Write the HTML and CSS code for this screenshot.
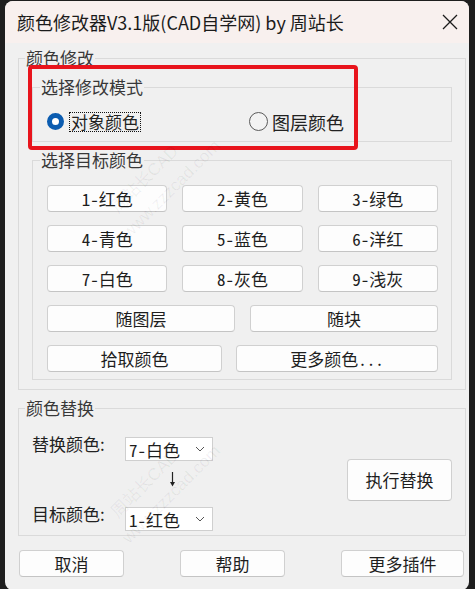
FILE: index.html
```html
<!DOCTYPE html>
<html lang="zh">
<head>
<meta charset="utf-8">
<title>颜色修改器</title>
<link rel="stylesheet" href="styles.css">
</head>
<body>
<div class="window">
  <div class="titlebar">
    <span class="title">颜色修改器V3.1版(CAD自学网) by 周站长</span>
    <svg class="close" width="16" height="16" viewBox="0 0 16 16"><path d="M1 1 L15 15 M15 1 L1 15" stroke="#1b1b1b" stroke-width="1.3" fill="none"/></svg>
  </div>
  <div class="client">
    <fieldset class="group outer">
      <legend>颜色修改</legend>
      <fieldset class="group inner mode">
        <legend>选择修改模式</legend>
        <div class="radios">
          <label class="radio"><span class="dot on"></span><span class="focus">对象颜色</span></label>
          <label class="radio second"><span class="dot"></span><span class="rtext">图层颜色</span></label>
        </div>
      </fieldset>
      <fieldset class="group inner target">
        <legend>选择目标颜色</legend>
        <div class="grid3">
          <button class="btn">1-红色</button>
          <button class="btn">2-黄色</button>
          <button class="btn">3-绿色</button>
          <button class="btn">4-青色</button>
          <button class="btn">5-蓝色</button>
          <button class="btn">6-洋红</button>
          <button class="btn">7-白色</button>
          <button class="btn">8-灰色</button>
          <button class="btn">9-浅灰</button>
        </div>
        <div class="grid2">
          <button class="btn">随图层</button>
          <button class="btn">随块</button>
        </div>
        <div class="grid2b">
          <button class="btn">拾取颜色</button>
          <button class="btn">更多颜色...</button>
        </div>
      </fieldset>
    </fieldset>
    <fieldset class="group replace">
      <legend>颜色替换</legend>
      <div class="replace-body">
        <div class="replace-left">
          <div class="field">
            <span class="flabel">替换颜色:</span>
            <div class="combo"><span>7-白色</span><svg width="10" height="6" viewBox="0 0 10 6"><path d="M1 1 L5 5 L9 1" stroke="#555" stroke-width="1" fill="none"/></svg></div>
          </div>
          <div class="arrow-row">
            <svg width="7" height="15" viewBox="0 0 7 15"><path d="M3.5 0 V11" stroke="#222" stroke-width="1.2"/><path d="M1 10 L6 10 L3.5 14.5 Z" fill="#222"/></svg>
          </div>
          <div class="field">
            <span class="flabel">目标颜色:</span>
            <div class="combo"><span>1-红色</span><svg width="10" height="6" viewBox="0 0 10 6"><path d="M1 1 L5 5 L9 1" stroke="#555" stroke-width="1" fill="none"/></svg></div>
          </div>
        </div>
        <button class="btn big">执行替换</button>
      </div>
    </fieldset>
    <div class="footer">
      <button class="btn fbtn">取消</button>
      <button class="btn fbtn">帮助</button>
      <button class="btn fbtn wide">更多插件</button>
    </div>
  </div>
  <div class="annot"></div>
  <div class="wm wm1"><div>周站长CAD</div><div>www.zzzcad.com</div></div>
  <div class="wm wm3"><div>周站长CAD</div><div>www.zzzcad.com</div></div>
</div>
</body>
</html>
```
FILE: styles.css
```css
html, body {
  margin: 0;
  padding: 0;
}
body {
  background: #1e1e1e;
  height: 589px;
  overflow: hidden;
  font-family: "Noto Sans CJK SC", sans-serif;
}
.window {
  position: relative;
  margin: 1px 0 0 5px;
  width: 464px;
  height: 589px;
  background: #f0f0f0;
  border-radius: 8px;
  overflow: hidden;
}
.titlebar {
  height: 42px;
  background: #f8f0ee;
  display: flex;
  align-items: center;
  justify-content: space-between;
  padding: 0 11px 0 12px;
}
.title {
  font-size: 18px;
  color: #1b1b1b;
  white-space: nowrap;
}
.close {
  display: block;
  margin-top: -1px;
}
.client {
  padding: 5px 3px 0 13px;
}
fieldset.group {
  margin: 0;
  border: 1px solid #dadada;
  min-width: 0;
}
fieldset.group > legend {
  font-size: 17px;
  line-height: 20px;
  padding: 0 1px;
  margin-left: -7px;
  color: #383838;
}
.outer {
  padding: 9px 13px 9px 13px;
}
.inner {
  padding: 13px 13px 7px 14px;
}
.mode {
  margin-bottom: 8px !important;
}
.target {
  padding-top: 15px;
}
.radios {
  display: flex;
  align-items: center;
  height: 24px;
}
.radio {
  display: flex;
  align-items: center;
  font-size: 17px;
  color: #222;
}
.second {
  margin-left: 108px;
  font-size: 18px;
}
.second .dot {
  width: 19px;
  height: 19px;
  margin-right: 4px;
}
.dot {
  box-sizing: border-box;
  width: 17px;
  height: 17px;
  border-radius: 50%;
  border: 1px solid #5a5a5a;
  background: #f3f3f3;
  margin-right: 5px;
  margin-top: -2px;
}
.dot.on {
  border: 5px solid #0b5cb0;
  background: #fff;
}
.focus {
  border: 1px dotted #111;
  line-height: 18px;
  padding: 0 1px;
}
.rtext {
  line-height: 20px;
}
.btn {
  box-sizing: border-box;
  height: 27px;
  padding: 0;
  margin: 0;
  background: #fdfdfd;
  border: 1px solid #d0d0d0;
  border-bottom-color: #c4c4c4;
  border-radius: 4px;
  font-family: "Noto Sans Mono CJK SC", "Noto Sans CJK SC", sans-serif;
  font-size: 17px;
  line-height: 20px;
  color: #1e1e1e;
}
.grid3 {
  display: grid;
  grid-template-columns: repeat(3, 1fr);
  gap: 13px 15px;
}
.grid2 {
  display: grid;
  grid-template-columns: 1fr 1fr;
  column-gap: 15px;
  margin-top: 13px;
}
.grid2b {
  display: grid;
  grid-template-columns: 175px 1fr;
  column-gap: 14px;
  margin-top: 13px;
}
.replace {
  margin-top: 8px !important;
  padding: 19px 13px 4px 13px;
}
.replace-body {
  display: flex;
  justify-content: space-between;
  align-items: flex-start;
}
.replace-left {
  display: flex;
  flex-direction: column;
}
.field {
  display: flex;
  align-items: flex-start;
}
.flabel {
  width: 93px;
  font-size: 17px;
  line-height: 20px;
  margin-top: -3px;
  color: #222;
}
.combo {
  box-sizing: border-box;
  width: 88px;
  height: 24px;
  background: #fff;
  border: 1px solid #cfcfcf;
  display: flex;
  align-items: center;
  justify-content: space-between;
  padding: 0 7px 0 3px;
  font-family: "Noto Sans Mono CJK SC", "Noto Sans CJK SC", sans-serif;
  font-size: 17px;
  color: #1e1e1e;
}
.combo svg {
  display: block;
}
.arrow-row {
  height: 46px;
  padding-left: 137px;
  padding-top: 11px;
  box-sizing: border-box;
}
.arrow-row svg {
  display: block;
}
.big {
  width: 105px;
  height: 42px;
  margin-top: 22px;
}
.footer {
  display: flex;
  justify-content: space-between;
  margin: 14px 2px 0 1px;
}
.fbtn {
  width: 105px;
}
.fbtn.wide {
  width: 123px;
}
.annot {
  position: absolute;
  left: 23px;
  top: 64px;
  width: 330px;
  height: 85px;
  box-sizing: border-box;
  border: 4.5px solid #e8141c;
  border-radius: 4px;
  pointer-events: none;
}
.wm {
  position: absolute;
  transform: rotate(-45deg);
  transform-origin: left top;
  color: rgba(0, 0, 0, 0.06);
  font-family: "Liberation Sans", "Noto Sans CJK SC", sans-serif;
  font-size: 17px;
  line-height: 26px;
  pointer-events: none;
  white-space: nowrap;
}
.wm div:last-child {
  margin-left: -10px;
}
.wm1 { left: 100px; top: 200px; }
.wm3 { left: 100px; top: 505px; }
```
